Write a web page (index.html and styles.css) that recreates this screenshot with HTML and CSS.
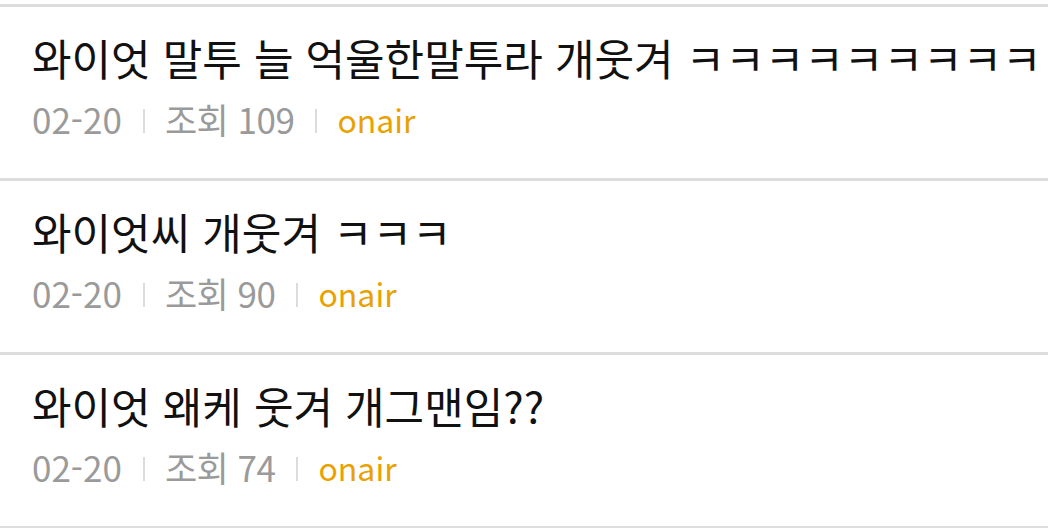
FILE: index.html
```html
<!DOCTYPE html>
<html lang="ko">
<head>
<meta charset="utf-8">
<link rel="stylesheet" href="styles.css">
</head>
<body>
<ul class="list">
  <li class="item">
    <div class="title">와이엇 말투 늘 억울한말투라 개웃겨 ㅋㅋㅋㅋㅋㅋㅋㅋㅋㅋㅋㅋㅋㅋㅋ</div>
    <div class="meta"><span class="date">02-20</span><span class="sep"></span><span class="views">조회 109</span><span class="sep"></span><span class="author">onair</span></div>
  </li>
  <li class="item">
    <div class="title">와이엇씨 개웃겨 ㅋㅋㅋ</div>
    <div class="meta"><span class="date">02-20</span><span class="sep"></span><span class="views">조회 90</span><span class="sep"></span><span class="author">onair</span></div>
  </li>
  <li class="item">
    <div class="title">와이엇 왜케 웃겨 개그맨임??</div>
    <div class="meta"><span class="date">02-20</span><span class="sep"></span><span class="views">조회 74</span><span class="sep"></span><span class="author">onair</span></div>
  </li>
</ul>
</body>
</html>
```

FILE: styles.css
```css
html, body {
  margin: 0;
  padding: 0;
  background: #fff;
  overflow: hidden;
}
body {
  font-family: "Noto Sans CJK KR", "Noto Sans", sans-serif;
  padding-top: 4px;
}
.list {
  list-style: none;
  margin: 0;
  padding: 0;
  border-top: 3px solid #dddddd;
}
.item {
  box-sizing: border-box;
  border-bottom: 3px solid #dddddd;
  height: 174px;
  padding: 18px 0 0 32px;
  overflow: hidden;
}
.title {
  font-size: 43px;
  line-height: 64px;
  color: #111;
  white-space: nowrap;
}
.meta {
  display: flex;
  align-items: center;
  margin-top: 8px;
  font-size: 35px;
  line-height: 44px;
  color: #9a9a9a;
  white-space: nowrap;
}
.views {
  letter-spacing: -0.5px;
}
.sep {
  width: 2px;
  height: 24px;
  background: #dcdcdc;
  margin: 4px 20px 0 21px;
}
.author {
  font-size: 32px;
  color: #e9a100;
}
```
